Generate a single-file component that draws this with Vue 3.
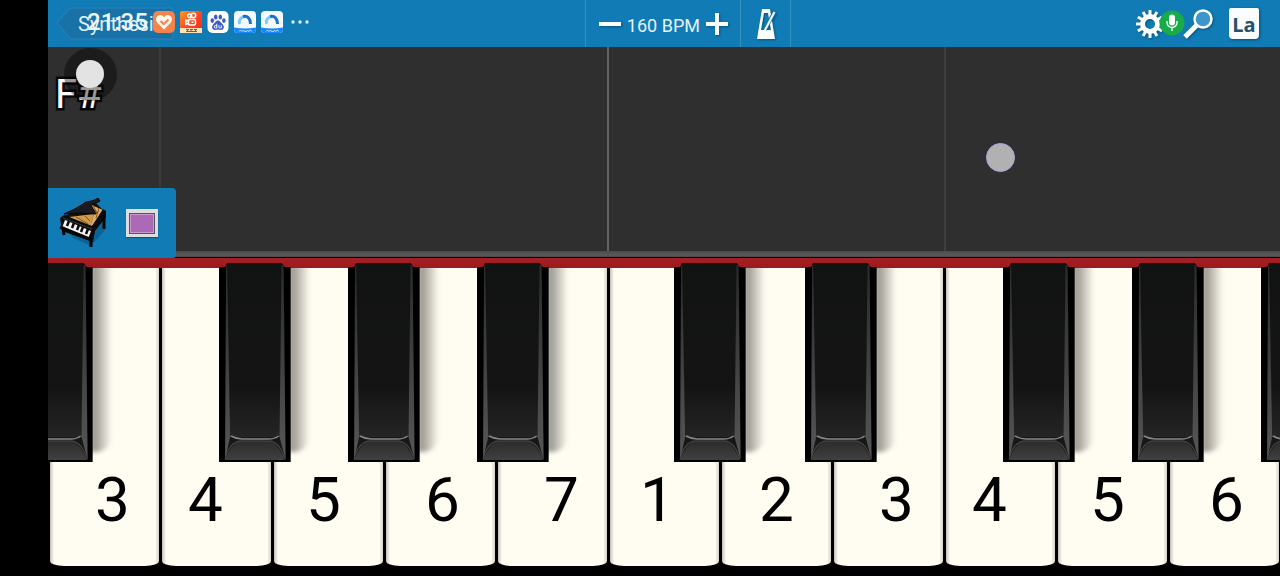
<script setup>
import { ref } from 'vue'

const bpm = ref(160)
const metronome = ref(false)

// black: left edge of the sharp key, in percent of a white key's width
const keys = [
  { n: 3, black: -24 },
  { n: 4, black: 53 },
  { n: 5, black: 68 },
  { n: 6, black: 83 },
  { n: 7 },
  { n: 1, black: 59 },
  { n: 2, black: 76 },
  { n: 3 },
  { n: 4, black: 53 },
  { n: 5, black: 68 },
  { n: 6, black: 83 },
]
</script>

<template>
  <main class="app">
    <header class="bar">
      <div class="left">
        <button class="back" type="button">
          <svg class="back-shape" viewBox="0 0 118 34" preserveAspectRatio="none" aria-hidden="true">
            <path d="M1 16 13 2Q14 1 17 1H115Q117 1 117 3V30Q117 32 115 32H17Q14 32 13 30Z" fill="#1872a8" stroke="#2c84b8" />
          </svg>
          <span>Synthesia</span>
        </button>
        <div class="status">
          <time>21:35</time>
          <svg class="app-icon" viewBox="0 0 22 22" aria-hidden="true">
            <rect width="22" height="22" rx="5" fill="#f5834a" />
            <path d="M11 18.500 4.600 12C1.200 8.200 4 3.800 7.400 4c1.700.1 2.900 1.100 3.600 2.300C11.700 5.100 12.900 4.100 14.600 4c3.400-.2 6.200 4.200 2.800 8Z" fill="#fff8ee" />
            <path d="m7.500 10 3.200 3.200 4.800-4.700" fill="none" stroke="#f5834a" stroke-width="2" />
          </svg>
          <svg class="app-icon" viewBox="0 0 22 22" aria-hidden="true">
            <defs><linearGradient id="ks" x1="0" y1="0" x2="1" y2="1"><stop stop-color="#ff9a1f" /><stop offset=".5" stop-color="#fb4a22" /><stop offset="1" stop-color="#f5271c" /></linearGradient></defs>
            <rect width="22" height="22" rx="2" fill="url(#ks)" />
            <g fill="none" stroke="#fff" stroke-width="1.500"><circle cx="9.500" cy="4.800" r="1.800" /><circle cx="13.500" cy="4.500" r="2.200" /><rect x="8.500" y="8.500" width="7" height="5.500" rx="1.500" /><path d="m8.500 10-2.500-1v4.500l2.500-1M11.500 11.200h2" /></g>
            <path d="M0 17h22v5H0Z" fill="#ffe3b8" />
            <path d="M6 18.500h3M7.500 18v3M10 18.500h3M11 18v3M14 18.500h3M15.500 18v3M6 20.500h11" stroke="#b8432a" />
          </svg>
          <svg class="app-icon" viewBox="0 0 22 22" aria-hidden="true">
            <rect x=".5" width="21" height="22" rx="5" fill="#fff" />
            <g fill="#3f5bc8"><ellipse cx="5.300" cy="9.600" rx="1.800" ry="2.300" /><ellipse cx="8.700" cy="5.900" rx="1.800" ry="2.500" /><ellipse cx="13.300" cy="5.900" rx="1.800" ry="2.500" /><ellipse cx="16.900" cy="9.600" rx="1.800" ry="2.300" /><path d="M11 9.500c2 0 2.400 1.500 4 3 3.500 3.300 1.500 6.500-1 6.500-1 0-2-.4-3-.4s-2 .4-3 .4c-2.500 0-4.500-3.200-1-6.500 1.600-1.500 2-3 4-3Z" /></g>
            <path d="M9.800 12.800v4.200H8.500a1.200 1.200 0 0 1 0-2.500h1.300M12 14.300v2q0 .7.700.7h1.600v-2.700" fill="none" stroke="#fff" />
          </svg>
          <svg v-for="i in 2" :key="i" class="app-icon" viewBox="0 0 22 22" aria-hidden="true">
            <rect width="22" height="22" rx="4" fill="#f4faff" />
            <path d="M5.500 13A5.800 5.800 0 0 1 11 5.500" fill="none" stroke="#7ccbf8" stroke-width="3" />
            <path d="M9 5.500C14 4.500 16.500 8 16.500 13" fill="none" stroke="#1c6fd0" stroke-width="3" />
            <path d="M0 16.500q11 2 22 0V18q0 4-4 4H4q-4 0-4-4Z" fill="#1587fa" />
            <path d="m5 20.500 1.500-1.500L8 20.500 9.500 19l1 1.500h2l1-1.500 1 1.500 2-1.500 1 1.500" fill="none" stroke="#bfe4ff" />
          </svg>
          <svg class="dots" viewBox="0 0 18 4" aria-hidden="true"><g fill="#e4f2fa"><circle cx="2" cy="2" r="1.700" /><circle cx="9" cy="2" r="1.700" /><circle cx="16" cy="2" r="1.700" /></g></svg>
        </div>
      </div>

      <div class="tempo">
        <button type="button" aria-label="Slower" @click="bpm--"><svg width="24" height="24" viewBox="0 0 24 24"><path d="M1 12h22" stroke="#fff" stroke-width="4" /></svg></button>
        <output>{{ bpm }} BPM</output>
        <button type="button" aria-label="Faster" @click="bpm++"><svg width="24" height="24" viewBox="0 0 24 24"><path d="M1 12h22M12 1v22" stroke="#fff" stroke-width="4" /></svg></button>
      </div>
      <button class="metro" type="button" aria-label="Metronome" :aria-pressed="metronome" @click="metronome = !metronome">
        <svg width="22" height="32" viewBox="0 0 22 32"><path d="M7 1h8l5 30H2ZM9 5 6 22h10L13 5Z" fill="#fff" fill-rule="evenodd" /><path d="M9.500 22 19.500 4" stroke="#167bb5" stroke-width="4" /><path d="M9.500 23 19.500 4" stroke="#fff" stroke-width="2" /></svg>
      </button>

      <div class="right">
        <button class="gear" type="button" aria-label="Settings">
          <svg width="30" height="30" viewBox="0 0 30 30">
            <g stroke="#fff" stroke-width="3"><path v-for="a in 12" :key="a" d="M15 1v6" :transform="`rotate(${a * 30} 15 15)`" /></g>
            <circle cx="15" cy="15" r="7.500" fill="none" stroke="#fff" stroke-width="5" />
          </svg>
        </button>
        <svg class="mic" width="26" height="26" viewBox="0 0 26 26" role="img" aria-label="Microphone in use"><circle cx="13" cy="13" r="12.500" fill="#18ac48" /><rect x="10" y="4.500" width="6" height="11" rx="3" fill="#fff" /><path d="M8 11v1.500a5 5 0 0 0 10 0V11M13 17.500V21" fill="none" stroke="#fff" stroke-width="1.300" /></svg>
        <button class="search" type="button" aria-label="Search">
          <svg width="30" height="30" viewBox="0 0 30 30"><path d="M2 28 13.500 16.500" stroke="#fff" stroke-width="5" /><circle cx="20" cy="10" r="8.500" fill="#3b96cb" stroke="#fff" stroke-width="2.500" /></svg>
        </button>
        <button class="la" type="button" aria-label="Note labels: La">La</button>
      </div>
    </header>

    <section class="roll">
      <div class="lane one"></div>
      <div class="lane four"></div>
      <div class="lane octave"></div>
      <div class="lane three"></div>
      <span class="chord">F#</span>
      <i class="halo"></i>
      <i class="touch"></i>
      <div class="part">
        <svg width="48" height="50" viewBox="0 0 48 50" role="img" aria-label="Grand piano">
          <path d="m8 32 6 8 18 8 14-16V20Z" fill="#064a70" opacity=".45" />
          <path d="m5 18 32-13 8 8 1 4-12 18L4 24Z" fill="#15100b" />
          <path d="m10 19 25-3-4 13Z" fill="#d09a4c" />
          <path d="M30 6 44 12 36 26 31 29 35 16Z" fill="#dcae62" />
          <path d="m30 8 9 7M34 7l4 9M40 10l-3 10M17 19l12 7M26 18l5 5" fill="none" stroke="#7d4f1e" />
          <path d="M5 16Q17 11 24 6C28 2 32 5 39 0L41 3C35 7 31 5 33 9L37 16Q20 14 5 16Z" fill="#1b1a20" stroke="#050505" />
          <path d="m1 20 4-3 28 11 11-17 3 2v6L36 33l-2 11L3 33Z" fill="#0b0b0d" />
          <path d="m4 20 29 11" stroke="#3b3b40" />
          <path d="m6 22 26 11-3 8L3 30Z" fill="#f4f4f4" />
          <path d="m10 23-2 5M15 25l-2 5M20 27l-2 5M24 29l-2 5M29 31l-2 5" stroke="#08080a" stroke-width="2.500" />
          <path d="m4 29 1 8M32 39v10M45 17v14M1 29l32 13" fill="none" stroke="#050506" stroke-width="3" />
        </svg>
        <button class="color" type="button" aria-label="Part colour"><span></span></button>
      </div>
      <i class="cursor"></i>
    </section>
    <div class="rail"></div>

    <section class="keyboard" aria-label="Keyboard">
      <div v-for="(k, i) in keys" :key="i" class="slot">
        <button class="white" :class="'d' + k.n" type="button">{{ k.n }}</button>
        <i v-if="k.black !== undefined" class="shade" :style="{ left: k.black + '%' }"></i>
        <svg v-if="k.black !== undefined" class="black" :style="{ left: k.black + '%' }" viewBox="0 0 71 199" preserveAspectRatio="none" aria-hidden="true">
          <defs>
            <linearGradient :id="'face' + i" x1="0" y1="0" x2="0" y2="1"><stop stop-color="#111312" /><stop offset=".7" stop-color="#141414" /><stop offset="1" stop-color="#262626" /></linearGradient>
            <linearGradient :id="'side' + i" x1="0" y1="0" x2="0" y2="1"><stop stop-color="#2a2a2a" /><stop offset=".5" stop-color="#404040" /><stop offset="1" stop-color="#565656" /></linearGradient>
            <linearGradient :id="'lip' + i" x1="0" y1="0" x2="0" y2="1"><stop stop-color="#2b2b2b" /><stop offset="1" stop-color="#404040" /></linearGradient>
          </defs>
          <path d="M0 4H6L8 0H62L65 4H71V199H0Z" fill="#000" />
          <path d="M7 2H64L66 196H6Z" :fill="'url(#side' + i + ')'" />
          <path d="M8 0H62L60 172Q59 177 52 178H19Q12 177 11 172Z" :fill="'url(#face' + i + ')'" />
          <path d="M11 174H60L66 197H6Z" fill="#171717" />
          <path d="M12 173Q17 176 23 176H49Q55 176 59 173" fill="none" stroke="#888" stroke-width="1.500" />
          <path d="M6 197Q11 183 19 178H52Q60 183 65 197Z" :fill="'url(#lip' + i + ')'" />
          <path d="M6 196Q10 180 20 178H51Q61 180 65 196" fill="none" stroke="#4a4a4a" />
        </svg>
      </div>
    </section>
  </main>
</template>

<style>
body { margin: 0; background: #000; }
</style>

<style scoped>
.app { box-sizing: border-box; min-height: 100vh; padding: 0 0 10px 48px; display: flex; flex-direction: column; overflow: hidden; background: #000; color: #fff; font-family: Roboto, "Liberation Sans", sans-serif; }
button { margin: 0; padding: 0; border: 0; background: none; color: inherit; font: inherit; cursor: pointer; }
svg { display: block; flex: none; }
.bar { height: 47px; display: grid; grid-template-columns: 11fr 156px 50px 10fr; background: #107bb5; }
.left { position: relative; display: flex; align-items: center; padding-left: 8px; }
.back { position: relative; width: 118px; height: 34px; padding-left: 22px; text-align: left; font-size: 20px; line-height: 34px; color: #e1f0f8; }
.back span { position: relative; }
.back-shape { position: absolute; inset: 0; width: 100%; height: 100%; }
.status { position: absolute; left: 39px; top: 8px; height: 28px; display: flex; align-items: center; gap: 5px; pointer-events: none; }
.status time { width: 61px; font-size: 24px; line-height: 28px; font-weight: 500; color: #edf7fc; }
.app-icon { width: 22px; height: 22px; }
.dots { width: 18px; height: 4px; margin-left: 3px; }
.tempo { display: flex; align-items: center; justify-content: center; gap: 5px; border-left: 1px solid #3791c1; border-right: 1px solid #3791c1; box-sizing: border-box; font-size: 18px; }
.tempo output { line-height: 24px; padding-top: 4px; color: #e6f2f9; white-space: nowrap; }
.tempo svg, .metro svg, .gear svg, .search svg { filter: drop-shadow(1px 1px 1px #07537c); }
.metro { display: flex; align-items: center; justify-content: center; border-right: 1px solid #3791c1; }
.right { display: flex; align-items: center; justify-content: flex-end; padding-right: 21px; }
.mic { margin: 0 -2px 2px -6px; position: relative; }
.la { width: 30px; height: 31px; margin-left: 16px; padding-top: 3px; border-radius: 2px 2px 4px 4px; background: #fafcfd; color: #24506b; font-family: "Open Sans", sans-serif; font-size: 20px; font-weight: 700; line-height: 26px; box-shadow: 1px 1px 3px #07537c; }
.roll { position: relative; flex: 1 0 204px; display: flex; background: #2f2f30; }
.lane { box-sizing: border-box; flex: 3 1 0; border-left: 2px solid #3e3e3f; }
.lane.one { flex-grow: 1; border: 0; }
.lane.four { flex-grow: 4; border-left-color: #3a3a3b; }
.lane.octave { border-left-color: #626263; }
.chord { position: absolute; left: 7px; top: 24px; font-size: 40px; line-height: 48px; -webkit-text-stroke: 5px #080808; paint-order: stroke fill; }
.halo, .touch, .cursor { position: absolute; border-radius: 50%; pointer-events: none; }
.halo { left: 16px; top: 1px; width: 53px; height: 53px; background: rgba(0, 0, 0, .4); }
.touch { left: 28px; top: 13px; width: 28px; height: 28px; background: #e3e3e3; }
.cursor { left: 76%; top: 96px; width: 27px; height: 27px; margin-left: 2px; background: #b1b1b1; border: 1px solid #a6a8df; }
.part { position: absolute; left: 0; bottom: -7px; z-index: 2; box-sizing: border-box; width: 128px; height: 70px; padding-left: 11px; display: flex; align-items: center; gap: 19px; background: #107bb5; border-radius: 0 4px 3px 0; }
.color { box-sizing: border-box; width: 32px; height: 28px; padding: 3px; background: #dedede; box-shadow: 0 1px 1px #075887; }
.color span { display: block; box-sizing: border-box; height: 21px; border: 1px solid #59535b; background: #ad69b6; box-shadow: inset 0 0 0 1px #c997ce; }
.rail { height: 7px; flex: none; background: linear-gradient(#4a4a4c, #5a5a5c 60%, #4c4c4e 80%, #050505 82%); }
.keyboard { position: relative; flex: none; height: 308px; display: grid; grid-template-columns: repeat(11, minmax(0, 1fr)); overflow: hidden; }
.keyboard::before { content: ""; position: absolute; z-index: 2; inset: 0 0 auto; height: 10px; background: linear-gradient(#a51f24, #9b1b1d); }
.slot { position: relative; display: flex; padding: 9px 1px 0 2px; background: #000; }
.white { flex: 1; padding-top: 202px; display: flex; justify-content: center; background: linear-gradient(90deg, #c5c1b8, #fffdf2 4px, #fffdf2 calc(100% - 4px), #d5d1c8); border-radius: 0 0 14px 14px / 0 0 5px 5px; color: #000; font-size: 62px; line-height: 62px; }
.d1 { padding-right: 14px; }
.d3 { padding-left: 16px; }
.d4 { padding-right: 22px; }
.d5 { padding-right: 10px; }
.d6 { padding-left: 4px; }
.d7 { padding-left: 18px; }
.black { position: absolute; z-index: 3; top: 5px; width: 64%; height: 199px; }
.shade { position: absolute; z-index: 1; top: 0; width: 64%; height: 194px; margin-left: 19px; background: linear-gradient(90deg, transparent 65%, #97948c 74%, #bdbab2 84%, rgba(225, 222, 212, 0) 100%); border-radius: 0 0 16px; filter: blur(2px); pointer-events: none; }
</style>
